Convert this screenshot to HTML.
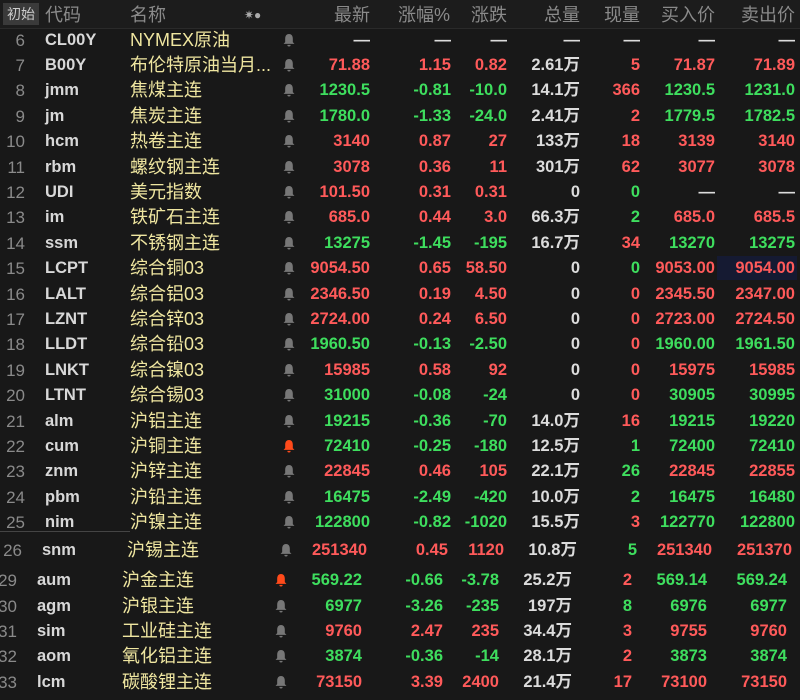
<!DOCTYPE html>
<html><head><meta charset="utf-8"><style>
body{margin:0;width:800px;height:700px;background:#181818;overflow:hidden;font-family:"Liberation Sans","Noto Sans CJK SC",sans-serif;position:relative}
.h{position:absolute;top:0;left:0;width:800px;height:28px;background:#1c1c1c;border-bottom:1px solid #2a2a2a;color:#8a8a8a;font-size:18px;line-height:30px}
.h span{position:absolute}
.r{position:absolute;left:0;width:800px;height:25px;line-height:25px;font-size:16.5px;font-weight:bold}
.r span{position:absolute;white-space:nowrap}
.i{color:#8a8a8a;font-weight:normal;font-size:17px}
.c{color:#d8d8d8}
.n{color:#efe6a0;font-weight:normal;font-size:18px}
.w{color:#dcdcdc}.R{color:#ff5a5a}.G{color:#3ede5e}
.b{width:12px;height:14px;top:5px}
</style></head><body>
<div class="h">
<span style="left:3px;top:3px;height:22px;line-height:22px;background:#3a3a3a;color:#ccc;font-size:14px;padding:0 4px">初始</span>
<span style="left:45px">代码</span><span style="left:130px">名称</span>
<span style="left:244px;font-size:12px;color:#aaa">✷●</span>
<span style="right:430px">最新</span><span style="right:350px">涨幅%</span><span style="right:293px">涨跌</span><span style="right:220px">总量</span><span style="right:160px">现量</span><span style="right:85px">买入价</span><span style="right:5px">卖出价</span>
</div>
<div style="position:absolute;left:717px;top:256px;width:80px;height:24px;background:#151a32"></div>
<div id="rows"></div>
<div style="position:absolute;left:0;top:531px;width:130px;height:1px;background:#444"></div>
<script>
var d=[
[40,0,"6","CL00Y","NYMEX原油","—w","—w","—w","—w","—w","—w","—w"],
[65,0,"7","B00Y","布伦特原油当月...","71.88R","1.15R","0.82R","2.61万w","5R","71.87R","71.89R"],
[90,0,"8","jmm","焦煤主连","1230.5G","-0.81G","-10.0G","14.1万w","366R","1230.5G","1231.0G"],
[116,0,"9","jm","焦炭主连","1780.0G","-1.33G","-24.0G","2.41万w","2R","1779.5G","1782.5G"],
[141,0,"10","hcm","热卷主连","3140R","0.87R","27R","133万w","18R","3139R","3140R"],
[167,0,"11","rbm","螺纹钢主连","3078R","0.36R","11R","301万w","62R","3077R","3078R"],
[192,0,"12","UDI","美元指数","101.50R","0.31R","0.31R","0w","0G","—w","—w"],
[217,0,"13","im","铁矿石主连","685.0R","0.44R","3.0R","66.3万w","2G","685.0R","685.5R"],
[243,0,"14","ssm","不锈钢主连","13275G","-1.45G","-195G","16.7万w","34R","13270G","13275G"],
[268,0,"15","LCPT","综合铜03","9054.50R","0.65R","58.50R","0w","0G","9053.00R","9054.00R"],
[294,0,"16","LALT","综合铝03","2346.50R","0.19R","4.50R","0w","0R","2345.50R","2347.00R"],
[319,0,"17","LZNT","综合锌03","2724.00R","0.24R","6.50R","0w","0R","2723.00R","2724.50R"],
[344,0,"18","LLDT","综合铅03","1960.50G","-0.13G","-2.50G","0w","0R","1960.00G","1961.50G"],
[370,0,"19","LNKT","综合镍03","15985R","0.58R","92R","0w","0R","15975R","15985R"],
[395,0,"20","LTNT","综合锡03","31000G","-0.08G","-24G","0w","0R","30905G","30995G"],
[421,0,"21","alm","沪铝主连","19215G","-0.36G","-70G","14.0万w","16R","19215G","19220G"],
[446,0,"22","cum","沪铜主连","72410G","-0.25G","-180G","12.5万w","1G","72400G","72410G",1],
[471,0,"23","znm","沪锌主连","22845R","0.46R","105R","22.1万w","26G","22845R","22855R"],
[497,0,"24","pbm","沪铅主连","16475G","-2.49G","-420G","10.0万w","2G","16475G","16480G"],
[522,0,"25","nim","沪镍主连","122800G","-0.82G","-1020G","15.5万w","3R","122770G","122800G"],
[550,-3,"26","snm","沪锡主连","251340R","0.45R","1120R","10.8万w","5G","251340R","251370R"],
[580,-8,"29","aum","沪金主连","569.22G","-0.66G","-3.78G","25.2万w","2R","569.14G","569.24G",1],
[606,-8,"30","agm","沪银主连","6977G","-3.26G","-235G","197万w","8G","6976G","6977G"],
[631,-8,"31","sim","工业硅主连","9760R","2.47R","235R","34.4万w","3R","9755R","9760R"],
[656,-8,"32","aom","氧化铝主连","3874G","-0.36G","-14G","28.1万w","2R","3873G","3874G"],
[682,-8,"33","lcm","碳酸锂主连","73150R","3.39R","2400R","21.4万w","17R","73100R","73150R"]];
var rt=[430,349,293,220,160,85,5],h="";
d.forEach(function(r){var x=r[1];h+='<div class="r" style="top:'+(r[0]-12)+'px">';
h+='<span class="i" style="right:'+(775-x)+'px">'+r[2]+'</span><span class="c" style="left:'+(45+x)+'px">'+r[3]+'</span><span class="n" style="left:'+(130+x)+'px">'+r[4]+'</span>';
h+='<svg class="b" style="position:absolute;left:'+(283+x)+'px" viewBox="0 0 11 12"><path d="M5.5 0.5C3 .5 2 2.5 2 5v3L.5 9.5h10L9 8V5C9 2.5 8 .5 5.5.5zM4 10.5a1.5 1.5 0 0 0 3 0z" fill="'+(r[12]?'#ff4a1a':'#777')+'"/></svg>';
for(var k=0;k<7;k++){var v=r[5+k],c=v.slice(-1),t=v.slice(0,-1);h+='<span class="'+c+'" style="right:'+(rt[k]-x)+'px">'+t+'</span>';}
h+='</div>';});
document.getElementById('rows').innerHTML=h;
</script>
</body></html>
